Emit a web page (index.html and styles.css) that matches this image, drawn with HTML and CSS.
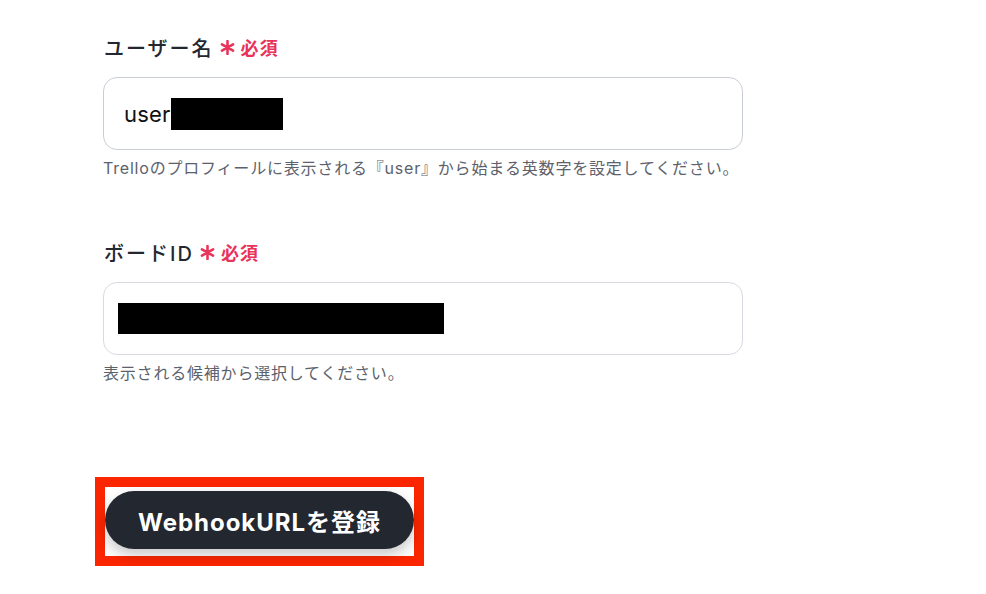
FILE: index.html
```html
<!DOCTYPE html>
<html lang="ja">
<head>
<meta charset="utf-8">
<title>Webhook設定</title>
<link rel="stylesheet" href="styles.css">
</head>
<body>
<div class="form">
  <div class="field">
    <label class="label">ユーザー名
      <span class="req">
        <svg class="star" viewBox="0 0 14 14"><path d="M7 1v12M1.8 4l10.4 6M1.8 10l10.4-6"/></svg>必須
      </span>
    </label>
    <div class="input"><span class="value">user</span><span class="mask mask-user"></span></div>
    <p class="help">Trelloのプロフィールに表示される『user』から始まる英数字を設定してください。</p>
  </div>

  <div class="field">
    <label class="label">ボードID
      <span class="req">
        <svg class="star" viewBox="0 0 14 14"><path d="M7 1v12M1.8 4l10.4 6M1.8 10l10.4-6"/></svg>必須
      </span>
    </label>
    <div class="input input-board"><span class="mask mask-board"></span></div>
    <p class="help">表示される候補から選択してください。</p>
  </div>

  <div class="actions">
    <div class="highlight">
      <button class="btn" type="button">WebhookURLを登録</button>
    </div>
  </div>
</div>
</body>
</html>
```

FILE: styles.css
```css
body {
    margin: 0;
    background: #fff;
    font-family: "Inter", "Noto Sans CJK JP", sans-serif;
    color: #23272f;
}
.form {
    width: 640px;
    padding: 33px 0 0 103px;
}
.field {
    margin-bottom: 58px;
}
.label {
    display: flex;
    align-items: center;
    height: 28px;
    font-size: 20px;
    font-weight: 500;
    letter-spacing: 0.1em;
    margin-bottom: 16px;
    padding-left: 1px;
}
.req {
    display: inline-flex;
    align-items: center;
    margin-left: 6px;
    color: #e8345a;
    font-size: 18px;
    font-weight: 600;
    letter-spacing: 0.06em;
}
.star {
    width: 15px;
    height: 15px;
    margin-right: 6px;
    fill: none;
    stroke: #e8345a;
    stroke-width: 2.4;
    stroke-linecap: round;
}
.input {
    display: flex;
    align-items: center;
    height: 71px;
    border: 1px solid #c9ced6;
    border-radius: 14px;
    padding-left: 20px;
    font-size: 22px;
    color: #111;
}
.input-board {
    border-color: #d7dbe1;
    padding-left: 14px;
}
.value {
    letter-spacing: 0.01em;
}
.mask {
    display: block;
    background: #000;
}
.mask-user {
    width: 112px;
    height: 32px;
}
.mask-board {
    width: 326px;
    height: 31px;
}
.help {
    margin: 6px 0 0;
    line-height: 24px;
    font-size: 16px;
    letter-spacing: 0.05em;
    color: #5c626c;
    white-space: nowrap;
}
.actions {
    margin-top: 92px;
}
.highlight {
    display: inline-block;
    margin-left: -8px;
    padding: 4px 0 7px;
    border: 10px solid #fb2600;
}
.btn {
    display: block;
    width: 309px;
    height: 58px;
    border: 0;
    border-radius: 29px;
    background: #23272f;
    color: #fff;
    font-family: "Inter", "Noto Sans CJK JP", sans-serif;
    font-size: 24px;
    font-weight: 700;
    letter-spacing: 0.04em;
    box-shadow: 0 6px 14px rgba(0, 0, 0, 0.22);
}
```
